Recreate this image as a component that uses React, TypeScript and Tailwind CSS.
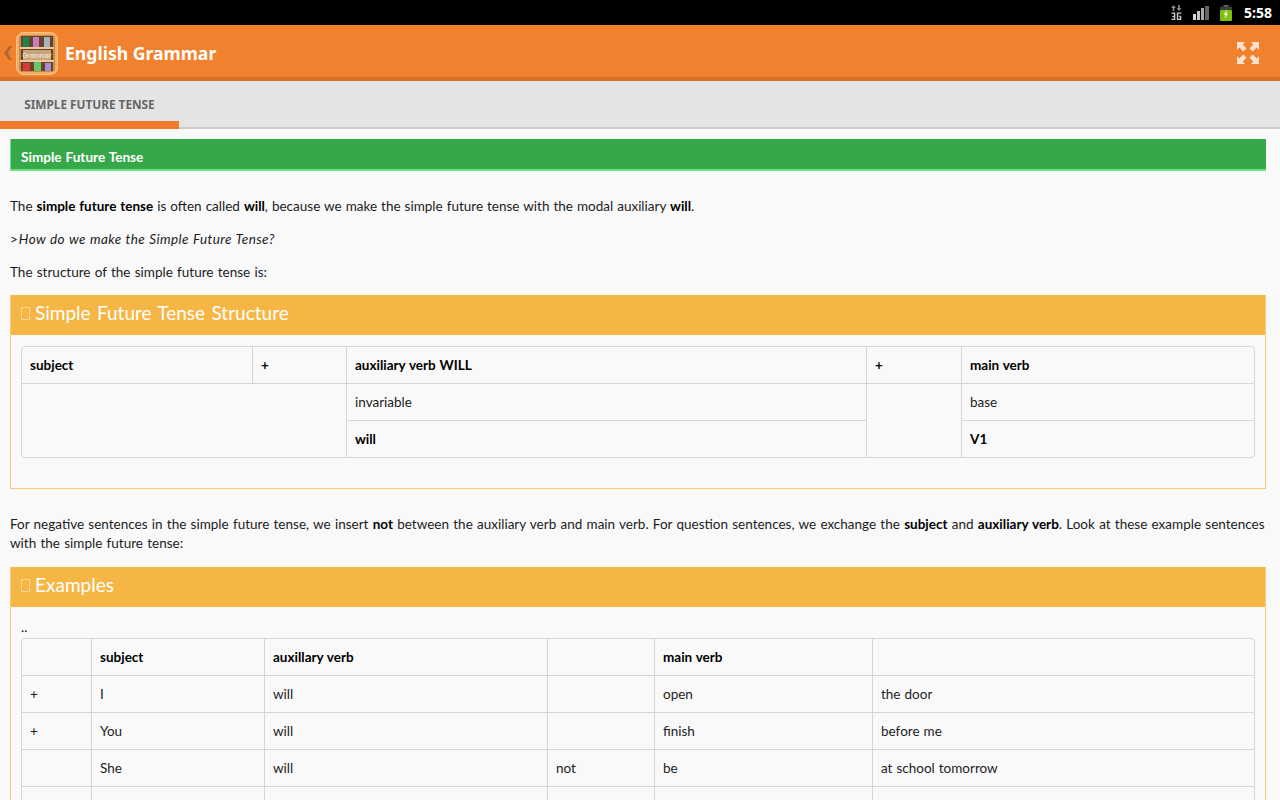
const bodyFont = "font-['Lato','Noto_Sans',sans-serif]";

const EXAMPLE_ROWS = [
  ["+", "I", "will", "", "open", "the door"],
  ["+", "You", "will", "", "finish", "before me"],
  ["", "She", "will", "not", "be", "at school tomorrow"],
  ["", "", "", "", "", ""],
];

function SignalIcons() {
  return (
    <div className="flex items-center">
      {/* 3G with arrows */}
      <svg width="11" height="15" viewBox="0 0 11 15" className="mr-[11px]">
        <path d="M2.500 0l2.300 3H3.300v3H1.700V3H.2zM8 6L5.700 3h1.500V0h1.600v3h1.500z" fill="#8f8f8f" />
        <path d="M.5 7.500h3.800V15H.5v-1.300h2.300v-1.800H1.200v-1h1.600V8.800H.5zM5.800 7.500h4.500v1.300H7.300v4.900h1.600v-1.900H8v-1h2.300V15H5.800z" fill="#c8c8c8" />
      </svg>
      {/* signal bars */}
      <svg width="16" height="14" viewBox="0 0 16 14" className="mr-[11px]">
        <rect x="0" y="8" width="3" height="6" fill="#d8d8d8" />
        <rect x="4" y="5" width="3" height="9" fill="#c8c8c8" />
        <rect x="8" y="2" width="3" height="12" fill="#aaaaaa" />
        <rect x="12" y="0" width="4" height="14" fill="#666666" />
      </svg>
      {/* battery */}
      <svg width="12" height="16" viewBox="0 0 12 16" className="mr-[12px]">
        <rect x="3.500" y="0" width="5" height="2" fill="#666" />
        <rect x="0" y="1.500" width="12" height="3.500" rx="1" fill="#3d3d3d" />
        <rect x="0" y="5" width="12" height="11" rx="1" fill="#7fbe14" />
        <path d="M7 4.500L3.500 10h2L4.500 14 8.500 8.500h-2z" fill="#e8f5b8" />
      </svg>
    </div>
  );
}

function AppLogo() {
  return (
    <svg width="42" height="43" viewBox="0 0 42 43" className="shrink-0">
      <rect x="0.500" y="0.500" width="41" height="42" rx="7" fill="#f4ad62" stroke="#f8c488" />
      <rect x="3" y="3" width="36" height="37" rx="4" fill="#c98a4a" />
      <rect x="5" y="4" width="32" height="35" fill="#6b432a" />
      {/* top shelf books */}
      <rect x="7" y="5" width="6" height="10" fill="#1d8449" />
      <rect x="17" y="5" width="6" height="10" fill="#c67fbd" />
      <rect x="28" y="5" width="6" height="10" fill="#a7b1b8" />
      <rect x="4" y="15" width="34" height="2" fill="#ecc896" />
      {/* sign */}
      <rect x="7" y="18" width="28" height="10" fill="#c7a37b" />
      <text x="21" y="25.500" textAnchor="middle" fontSize="6.500" fontFamily="Liberation Sans, sans-serif" fontWeight="700" fill="#efdfc6">Grammar</text>
      <rect x="4" y="28" width="34" height="2" fill="#ecc896" />
      {/* bottom shelf books */}
      <rect x="7" y="31" width="7" height="8" fill="#d93a3a" />
      <rect x="18" y="30" width="7" height="9" fill="#67c56a" />
      <rect x="29" y="31" width="6" height="8" fill="#a78cd2" />
    </svg>
  );
}

function ExpandIcon() {
  return (
    <svg width="22" height="22" viewBox="0 0 22 22" fill="#fbe3cd">
      <path d="M0 0h8L5.600 2.400 9.500 6.300 6.300 9.500 2.400 5.600 0 8z" />
      <path d="M22 0h-8l2.400 2.400-3.900 3.900 3.200 3.200 3.900-3.900L22 8z" />
      <path d="M0 22h8l-2.400-2.400 3.900-3.900-3.200-3.200-3.900 3.900L0 14z" />
      <path d="M22 22h-8l2.400-2.400-3.900-3.900 3.200-3.200 3.900 3.900L22 14z" />
    </svg>
  );
}

function PanelHeader({ title }: { title: string }) {
  return (
    <div className="h-10 bg-[#f6b645] flex items-center pl-[10px] pb-1 text-white text-[19px] [word-spacing:1.5px]">
      <span className="w-[9px] h-[13px] border border-[#fad58e] mr-[5px] mt-px" />
      {title}
    </div>
  );
}

const base = "px-2 align-middle border-t border-[#d6d6d6]";
const cellFirst = `h-[37px] ${base}`;
const cell = `h-[37px] border-l ${base}`;
const headFirst = "h-[36px] px-2 align-middle";
const head = "h-[36px] px-2 align-middle border-l border-[#d6d6d6]";

export default function App() {
  return (
    <div className={`w-[1280px] h-[800px] overflow-hidden bg-[#f9f9f9] text-[13.500px] text-[#1c1c1c] [&_b]:text-black ${bodyFont}`}>
      {/* status bar */}
      <div className="h-[25px] bg-black flex items-center justify-end pr-[8px] font-['Noto_Sans',sans-serif]">
        <SignalIcons />
        <span className="text-white text-[14px] font-bold">5:58</span>
      </div>

      {/* action bar */}
      <div className="h-[56px] pt-1 bg-[#f1812f] bg-[conic-gradient(#f2832f_25%,#ef7f2d_0_50%,#f2832f_0_75%,#ef7f2d_0)] bg-[length:2px_2px] border-b-4 border-[#d9702a] flex items-center font-['Noto_Sans',sans-serif]">
        <span className="w-[16px] pl-[4px] text-[#b5672d] flex">
          <svg width="8" height="14" viewBox="0 0 8 14" fill="currentColor"><path d="M5 0h3L4 7l4 7H5L0 7z" /></svg>
        </span>
        <AppLogo />
        <span className="ml-[7px] text-white text-[17.600px] font-bold">English Grammar</span>
        <span className="ml-auto mr-[21px] flex"><ExpandIcon /></span>
      </div>

      {/* tab strip */}
      <div className="h-[48px] bg-[conic-gradient(#dfdfdf_25%,#e9e9e9_0_50%,#dfdfdf_0_75%,#e9e9e9_0)] bg-[length:2px_2px] border-b-2 border-[#cccccc] font-['Noto_Sans',sans-serif]">
        <div className="w-[179px] h-[48px] pt-2 border-b-[8px] border-[#f07a2c] flex items-center justify-center text-[#666] text-[11.800px] font-bold">
          SIMPLE FUTURE TENSE
        </div>
      </div>

      {/* content */}
      <div className="pl-[10px] pr-[14px] pt-[10px] [word-spacing:0.55px]">
        <div className="h-8 pt-[7px] bg-[#36a84a] border-b-2 border-l border-[#6fe084] flex items-center pl-[10px] text-white font-bold text-[13.600px]">
          Simple Future Tense
        </div>

        <p className="mt-[27px] leading-[17px]">
          The <b>simple future tense</b> is often called <b>will</b>, because we make the simple future tense with the modal auxiliary <b>will</b>.
        </p>
        <p className="mt-4 leading-[17px]">&gt;<i className="ml-px tracking-[0.4px]">How do we make the Simple Future Tense?</i></p>
        <p className="mt-4 leading-[17px] [word-spacing:0.8px]">The structure of the simple future tense is:</p>

        <div className="mt-[14px] h-[194px] border border-[#f8cb75] border-t-0">
          <PanelHeader title="Simple Future Tense Structure" />
          <div className="px-[10px] pt-[11px]">
            <table className="w-full table-fixed border-separate border-spacing-0 border border-[#d6d6d6] rounded-[4px]">
              <colgroup>
                <col className="w-[230px]" />
                <col className="w-[94px]" />
                <col className="w-[520px]" />
                <col className="w-[95px]" />
                <col />
              </colgroup>
              <tbody>
                <tr>
                  <td className={headFirst}><b>subject</b></td>
                  <td className={head}><b>+</b></td>
                  <td className={head}><b>auxiliary verb WILL</b></td>
                  <td className={head}><b>+</b></td>
                  <td className={head}><b>main verb</b></td>
                </tr>
                <tr>
                  <td colSpan={2} rowSpan={2} className={cellFirst}></td>
                  <td className={cell}>invariable</td>
                  <td rowSpan={2} className={cell}></td>
                  <td className={cell}>base</td>
                </tr>
                <tr>
                  <td className={cell}><b>will</b></td>
                  <td className={cell}><b>V1</b></td>
                </tr>
              </tbody>
            </table>
          </div>
        </div>

        <p className="mt-[26px] leading-[19px] [word-spacing:0.8px]">
          For negative sentences in the simple future tense, we insert <b>not</b> between the auxiliary verb and main verb. For question sentences, we exchange the <b>subject</b> and <b>auxiliary verb</b>. Look at these example sentences with the simple future tense:
        </p>

        <div className="mt-[14px] border border-[#f8cb75] border-t-0">
          <PanelHeader title="Examples" />
          <div className="px-[10px]">
            <p className="pt-3 h-[31px] leading-[17px]">..</p>
            <table className="w-full table-fixed border-separate border-spacing-0 border border-[#d6d6d6] rounded-[4px]">
              <colgroup>
                <col className="w-[69px]" />
                <col className="w-[173px]" />
                <col className="w-[283px]" />
                <col className="w-[107px]" />
                <col className="w-[218px]" />
                <col />
              </colgroup>
              <tbody>
                <tr>
                  <td className={headFirst}></td>
                  <td className={head}><b>subject</b></td>
                  <td className={head}><b>auxillary verb</b></td>
                  <td className={head}></td>
                  <td className={head}><b>main verb</b></td>
                  <td className={head}></td>
                </tr>
                {EXAMPLE_ROWS.map((row, i) => (
                  <tr key={i}>
                    {row.map((text, j) => (
                      <td key={j} className={j === 0 ? cellFirst : cell}>{text}</td>
                    ))}
                  </tr>
                ))}
              </tbody>
            </table>
          </div>
        </div>
      </div>
    </div>
  );
}
